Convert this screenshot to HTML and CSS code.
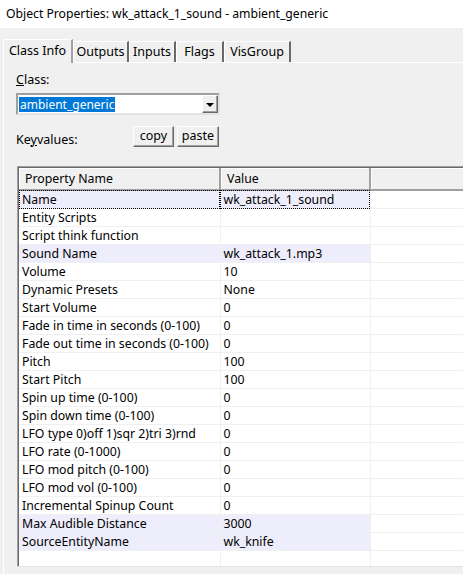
FILE: index.html
```html
<!DOCTYPE html>
<html lang="en">
<head>
    <meta charset="UTF-8">
    <title>Object Properties</title>
    <link rel="stylesheet" href="styles.css">
</head>
<body>

    <div class="titlebar">Object Properties: wk_attack_1_sound - ambient_generic</div>

    <!-- Tabs -->
    <div class="tabs">
        <div class="tab active tab-class">Class Info</div>
        <div class="tab tab-outputs">Outputs</div>
        <div class="tab tab-inputs">Inputs</div>
        <div class="tab tab-flags">Flags</div>
        <div class="tab tab-vis">VisGroup</div>
    </div>

    <div class="page">
        <div class="label"><u>C</u>lass:</div>
        <div class="combo">
            <span class="combo-text">ambient_generic</span>
            <span class="combo-btn"><span class="arrow"></span></span>
        </div>

        <div class="kv-row">
            <span class="label kv-label">Ke<u>y</u>values:</span>
            <button class="btn btn-copy">copy</button>
            <button class="btn btn-paste">paste</button>
        </div>

        <!-- Property list -->
        <div class="list">
            <table class="props">
                <colgroup>
                    <col class="col-name">
                    <col class="col-value">
                    <col>
                </colgroup>
                <thead>
                    <tr>
                        <th>Property Name</th>
                        <th>Value</th>
                        <th></th>
                    </tr>
                </thead>
                <tbody>
                    <tr class="hl focus"><td>Name</td><td>wk_attack_1_sound</td><td></td></tr>
                    <tr><td>Entity Scripts</td><td></td><td></td></tr>
                    <tr><td>Script think function</td><td></td><td></td></tr>
                    <tr class="hl"><td>Sound Name</td><td>wk_attack_1.mp3</td><td></td></tr>
                    <tr><td>Volume</td><td>10</td><td></td></tr>
                    <tr><td>Dynamic Presets</td><td>None</td><td></td></tr>
                    <tr><td>Start Volume</td><td>0</td><td></td></tr>
                    <tr><td>Fade in time in seconds (0-100)</td><td>0</td><td></td></tr>
                    <tr><td>Fade out time in seconds (0-100)</td><td>0</td><td></td></tr>
                    <tr><td>Pitch</td><td>100</td><td></td></tr>
                    <tr><td>Start Pitch</td><td>100</td><td></td></tr>
                    <tr><td>Spin up time (0-100)</td><td>0</td><td></td></tr>
                    <tr><td>Spin down time (0-100)</td><td>0</td><td></td></tr>
                    <tr><td>LFO type 0)off 1)sqr 2)tri 3)rnd</td><td>0</td><td></td></tr>
                    <tr><td>LFO rate (0-1000)</td><td>0</td><td></td></tr>
                    <tr><td>LFO mod pitch (0-100)</td><td>0</td><td></td></tr>
                    <tr><td>LFO mod vol (0-100)</td><td>0</td><td></td></tr>
                    <tr><td>Incremental Spinup Count</td><td>0</td><td></td></tr>
                    <tr class="hl"><td>Max Audible Distance</td><td>3000</td><td></td></tr>
                    <tr class="hl"><td>SourceEntityName</td><td>wk_knife</td><td></td></tr>
                    <tr><td></td><td></td><td></td></tr>
                </tbody>
            </table>
        </div>
    </div>

</body>
</html>
```

FILE: styles.css
```css
body {
    margin: 0;
    width: 463px;
    height: 574px;
    overflow: hidden;
    background-color: #f0f0f0;
    font-family: "Noto Sans", "Liberation Sans", sans-serif;
    font-size: 12px;
    color: #000;
}
.titlebar {
    height: 28px;
    line-height: 28px;
    padding-left: 6px;
    background-color: white;
    font-size: 12.2px;
    white-space: nowrap;
}
.tabs {
    display: flex;
    align-items: flex-end;
    height: 34px;
    padding-left: 3px;
}
.tab {
    height: 20px;
    line-height: 20px;
    text-align: center;
    border-top: 1px solid white;
    border-left: 1px solid white;
    border-right: 2px solid #696969;
    font-size: 12.5px;
}
.tab-class { width: 67px; }
.tab-outputs { width: 53px; }
.tab-inputs { width: 44px; }
.tab-flags { width: 45px; }
.tab-vis { width: 64px; }
.tab.active {
    height: 23px;
    line-height: 22px;
    border-right: 2px solid #a0a0a0;
    margin-bottom: -1px;
    position: relative;
    background-color: #f0f0f0;
}
.page {
    border-top: 1px solid white;
    border-left: 1px solid white;
    margin-left: 3px;
    height: 520px;
    padding-left: 12px;
}
.label {
    font-size: 12.5px;
}
.page > .label {
    padding-top: 8px;
    height: 21px;
}
.combo {
    display: flex;
    align-items: center;
    width: 199px;
    height: 18px;
    margin-top: 1px;
    background-color: white;
    border: 2px solid;
    border-color: #a0a0a0 #e3e3e3 #e3e3e3 #a0a0a0;
    padding-left: 1px;
}
.combo-text {
    background-color: #0078d7;
    color: white;
    font-size: 12px;
    line-height: 15px;
    padding: 0 1px;
}
.combo-btn {
    margin-left: auto;
    width: 14px;
    height: 16px;
    background-color: #f0f0f0;
    border: 1px solid;
    border-color: white #696969 #696969 white;
    box-shadow: inset -1px -1px #a0a0a0;
    display: flex;
    align-items: center;
    justify-content: center;
}
.arrow {
    width: 0;
    height: 0;
    border-left: 4px solid transparent;
    border-right: 4px solid transparent;
    border-top: 4px solid black;
    margin-top: 1px;
}
.kv-row {
    display: flex;
    align-items: center;
    margin-top: 10px;
    height: 22px;
}
.kv-label {
    width: 117px;
    padding-top: 6px;
}
.btn {
    height: 21px;
    padding: 0;
    margin-right: 3px;
    background-color: #f0f0f0;
    border: 1px solid;
    border-color: white #696969 #696969 white;
    box-shadow: inset -1px -1px #a0a0a0;
    font-family: inherit;
    font-size: 12.5px;
    line-height: 18px;
}
.btn-copy { width: 41px; }
.btn-paste { width: 42px; }
.list {
    margin-top: 19px;
    margin-left: 1px;
    width: 460px;
    height: 398px;
    overflow: hidden;
    background-color: white;
    border-top: 1px solid #a0a0a0;
    border-left: 1px solid #a0a0a0;
    border-bottom: 1px solid #e3e3e3;
    box-shadow: inset 1px 1px #696969;
    padding: 1px 0 0 1px;
}
.props {
    border-collapse: collapse;
    table-layout: fixed;
    width: 500px;
    font-size: 12.3px;
}
.col-name {
    width: 201px;
}
.col-value {
    width: 150px;
}
.props th {
    height: 21px;
    padding: 0 0 0 6px;
    text-align: left;
    font-weight: normal;
    background-color: #f0f0f0;
    border-right: 2px solid #a0a0a0;
    border-bottom: 2px solid #a0a0a0;
    box-shadow: inset 1px 1px white;
}
.props td {
    height: 17px;
    padding: 0 0 0 3px;
    line-height: 17px;
    border-bottom: 1px solid #f0f0f0;
    border-right: 1px solid #f0f0f0;
    white-space: nowrap;
    overflow: hidden;
}
.props tr.hl td:nth-child(-n+2) {
    background-color: #ededfb;
}
.props tr.focus td:nth-child(-n+2) {
    outline: 1px dotted black;
    outline-offset: -1px;
}
```
